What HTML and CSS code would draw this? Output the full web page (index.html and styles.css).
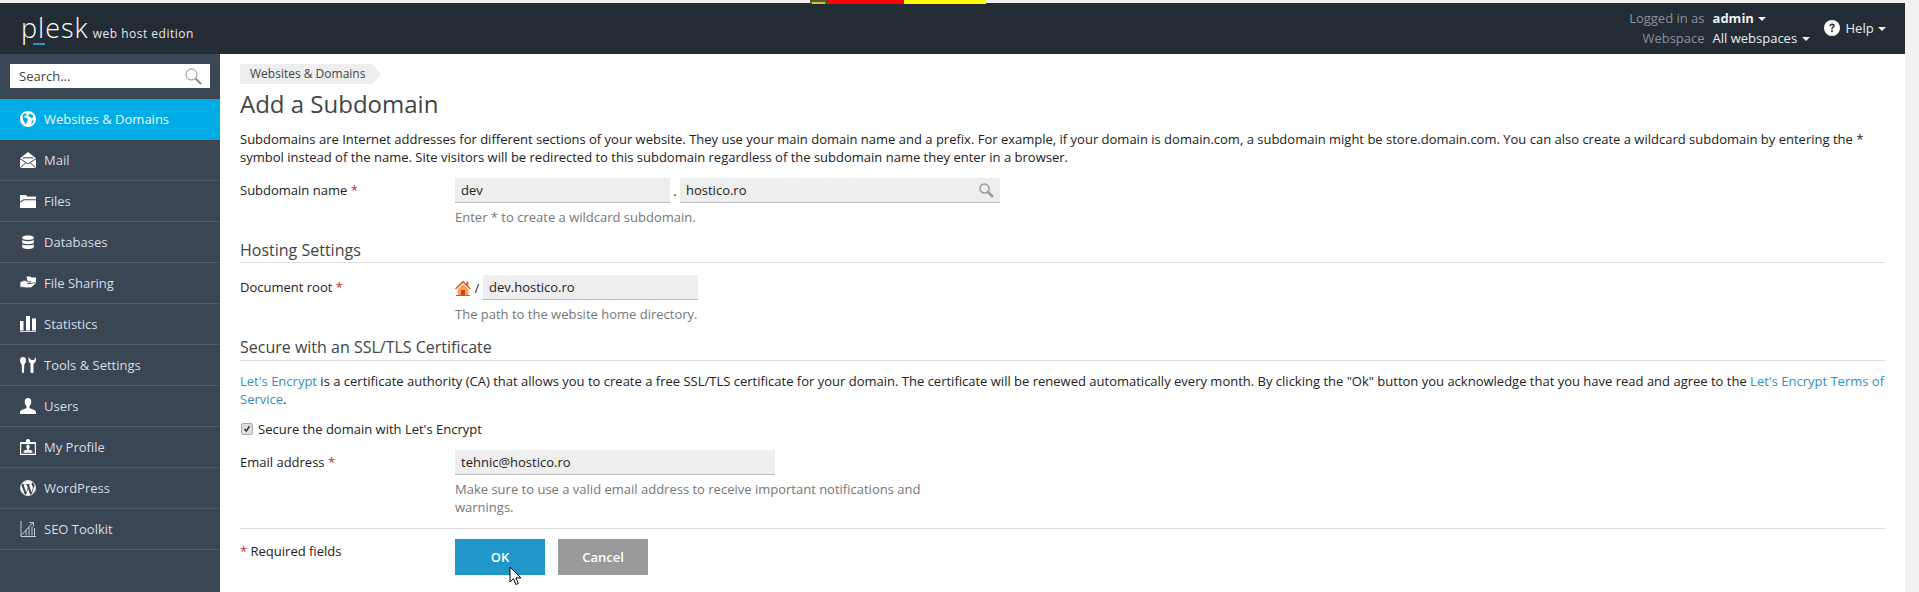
FILE: index.html
```html
<!DOCTYPE html>
<html lang="en">
<head>
    <meta charset="UTF-8">
    <meta name="viewport" content="width=device-width, initial-scale=1.0">
    <title>Add a Subdomain</title>
    <link rel="stylesheet" href="styles.css">
</head>
<body>
    <div class="page">
        <header class="topbar">
            <div class="strip">
                <span class="strip-icon"></span>
                <span class="strip-red"></span>
                <span class="strip-yellow"></span>
            </div>
            <div class="logo">
                <span class="logo-plesk">plesk</span>
                <span class="logo-edition">web host edition</span>
            </div>
            <div class="user-area">
                <div class="user-grid">
                    <span class="user-label">Logged in as</span>
                    <span class="user-value user-name">admin <i class="caret"></i></span>
                    <span class="user-label">Webspace</span>
                    <span class="user-value">All webspaces <i class="caret"></i></span>
                </div>
                <div class="help">
                    <svg class="help-icon" viewBox="0 0 16 16"><circle cx="8" cy="8" r="8" fill="#fff"/><path d="M5.400 6.200c0-1.600 1.200-2.600 2.700-2.600s2.600.9 2.600 2.200c0 1.900-2 1.900-2 3.400H7.100c0-2.200 1.800-2.200 1.800-3.300 0-.5-.4-.9-.9-.9-.6 0-1 .4-1 1.200z" fill="#232b35"/><rect x="7.100" y="10.300" width="1.700" height="1.800" fill="#232b35"/></svg>
                    <span>Help <i class="caret"></i></span>
                </div>
            </div>
        </header>

        <div class="layout">
            <aside class="sidebar">
                <div class="search">
                    <span>Search...</span>
                    <svg class="search-icon" viewBox="0 0 17 17"><circle cx="6.500" cy="6.500" r="5.500" fill="none" stroke="#888" stroke-width="1"/><path d="M10.500 10.500l5.500 5.500" stroke="#888" stroke-width="2"/></svg>
                </div>
                <nav>
                    <ul class="nav">
                        <li class="nav-item active">
                            <svg class="nav-icon" viewBox="0 0 16 16"><circle cx="8" cy="8" r="8" fill="#fff"/><path d="M3 3.500c1.500-1 3-1.200 3.800-.6l-.6 1.600-1.900.4.2 1.700 2.300.5 1.200 1.700-1 2.500-1.500 1.600C3.800 11 1.800 7 3 3.500zM9 2.600l3.600 1.400.8 2.300-2 .9-1.600-1.500-1.300-.4zM12.500 9l1.200.4-.9 2.700-1.800 1.300z" fill="#00ace6"/></svg>
                            <span>Websites &amp; Domains</span>
                        </li>
                        <li class="nav-item">
                            <svg class="nav-icon" viewBox="0 0 16 16"><path d="M8 0L0 6.200V16h16V6.200z" fill="#fff"/><path d="M0 6.600l8 5.400 8-5.400M.3 15.800l5.700-5.200M15.700 15.800L10 10.600M2.800 5.800h10.400" fill="none" stroke="#3a4653" stroke-width="1"/></svg>
                            <span>Mail</span>
                        </li>
                        <li class="nav-item">
                            <svg class="nav-icon" viewBox="0 0 16 16"><path d="M0 2h6l1 1.500h9v2.700H3.500L0 8.500z" fill="#fff"/><path d="M0 9.800l4-2.600h12V15H0z" fill="#fff"/></svg>
                            <span>Files</span>
                        </li>
                        <li class="nav-item">
                            <svg class="nav-icon" viewBox="0 0 16 16"><path d="M2.300 3.200C2.300 .9 13.700 .9 13.700 3.200v10c0 2.300-11.400 2.300-11.400 0z" fill="#fff"/><path d="M2.300 5.200c1.500 1.800 9.900 1.800 11.400 0M2.300 9.400c1.500 1.800 9.900 1.800 11.400 0" fill="none" stroke="#3a4653" stroke-width="1.200"/></svg>
                            <span>Databases</span>
                        </li>
                        <li class="nav-item">
                            <svg class="nav-icon" viewBox="0 0 16 16"><path d="M6.500 1.500h4l1 1H16v6H8z" fill="#fff"/><path d="M0 7l3-1.200c2-.6 3 .5 5 .5h2c1 0 1 1.700 0 1.700H7.500v.6H11l4-1.100c1 0 1.200.8.500 1.300L11 12.800H5l-2-.6H0z" fill="#fff" stroke="#3a4653" stroke-width=".7"/></svg>
                            <span>File Sharing</span>
                        </li>
                        <li class="nav-item">
                            <svg class="nav-icon" viewBox="0 0 16 16"><rect x="0" y="5" width="3.500" height="9.500" fill="#fff"/><rect x="6" y="0" width="4" height="14.500" fill="#fff"/><rect x="12" y="2.500" width="4" height="12" fill="#fff"/><rect x="0" y="15.200" width="16" height=".8" fill="#fff"/></svg>
                            <span>Statistics</span>
                        </li>
                        <li class="nav-item">
                            <svg class="nav-icon" viewBox="0 0 16 16"><path d="M0 3.500C0 1.500 1 0 3 0s3 1.500 3 3.500-1 3-1.700 4L4 15c0 1-.5 1-1 1s-1 0-1-1L1.700 7.500C1 6.500 0 5.500 0 3.500z" fill="#fff"/><path d="M8.500 0v3.500c0 1 1 2.500 2 3V15c0 1 .8 1 1.500 1s1.500 0 1.500-1V6.500c1-.5 2.500-2 2.500-3V0l-2 3h-1l-1-.1-1-.1z" fill="#fff"/></svg>
                            <span>Tools &amp; Settings</span>
                        </li>
                        <li class="nav-item">
                            <svg class="nav-icon" viewBox="0 0 16 16"><path d="M8 0c2.200 0 3.300 1.600 3.300 3.800 0 2-.9 3.700-1.800 4.500v1.700c1.500 1.200 6.500 1.500 6.500 4.500v1.500H0v-1.500C0 11.500 5 11.200 6.500 10V8.300C5.600 7.500 4.700 5.800 4.700 3.800 4.700 1.600 5.800 0 8 0z" fill="#fff"/></svg>
                            <span>Users</span>
                        </li>
                        <li class="nav-item">
                            <svg class="nav-icon" viewBox="0 0 16 16"><path d="M0 3h6V1.500A2 1.500 0 0 1 10 1.500V3h6v13H0z M1.200 5v9.800h13.600V5z" fill="#fff" fill-rule="evenodd"/><path d="M8 5.500c1.200 0 1.700 1 1.700 2 0 1-.5 1.800-.9 2.300v.7c1 .6 3.700.7 3.700 2.500v.8h-9v-.8c0-1.800 2.700-1.900 3.700-2.500v-.7c-.4-.5-.9-1.300-.9-2.300 0-1 .5-2 1.700-2z" fill="#fff"/></svg>
                            <span>My Profile</span>
                        </li>
                        <li class="nav-item">
                            <svg class="nav-icon" viewBox="2 2 20 20"><circle cx="12" cy="12" r="9.500" fill="none" stroke="#fff" stroke-width="1"/><path d="M12.158 12.786l-2.698 7.84c.806.236 1.657.365 2.54.365 1.047 0 2.05-.18 2.986-.51-.024-.037-.046-.078-.065-.123l-2.762-7.57zM3.009 12c0 3.559 2.068 6.634 5.067 8.092L3.788 8.341C3.289 9.459 3.009 10.696 3.009 12zm15.06-.454c0-1.112-.399-1.881-.741-2.48-.456-.741-.883-1.368-.883-2.109 0-.826.627-1.596 1.51-1.596.04 0 .078.005.116.007-1.599-1.465-3.731-2.36-6.071-2.36-3.141 0-5.904 1.612-7.512 4.053.211.007.41.011.579.011.94 0 2.396-.114 2.396-.114.484-.028.541.683.057.74 0 0-.487.057-1.029.085l3.274 9.739 1.968-5.901-1.401-3.838c-.484-.028-.943-.085-.943-.085-.485-.029-.428-.769.057-.741 0 0 1.484.114 2.368.114.94 0 2.397-.114 2.397-.114.485-.028.542.683.057.74 0 0-.488.057-1.029.085l3.249 9.665.897-2.996c.456-1.169.684-2.137.684-2.907zm1.820-3.860c.039.286.06.593.06.924 0 .912-.171 1.938-.684 3.22l-2.746 7.94c2.673-1.558 4.47-4.454 4.47-7.771 0-1.564-.399-3.034-1.1-4.314z" fill="#fff"/></svg>
                            <span>WordPress</span>
                        </li>
                        <li class="nav-item">
                            <svg class="nav-icon" viewBox="0 0 16 16"><g fill="none" stroke="#d8dde2" stroke-width=".9"><path d="M1 0v15.500H16M1 14.500L12.500 2"/><path d="M9.500 1.500H13.500V5.500"/><path d="M6 14.500V9.500M9 14.500V6.500M12 14.500V5.500M14.500 14.500V7"/></g></svg>
                            <span>SEO Toolkit</span>
                        </li>
                    </ul>
                </nav>
            </aside>

            <main class="main-content">
                <div class="breadcrumb">Websites &amp; Domains</div>
                <h1 class="title">Add a Subdomain</h1>
                <p class="intro">Subdomains are Internet addresses for different sections of your website. They use your main domain name and a prefix. For example, if your domain is domain.com, a subdomain might be store.domain.com. You can also create a wildcard subdomain by entering the * symbol instead of the name. Site visitors will be redirected to this subdomain regardless of the subdomain name they enter in a browser.</p>

                <div class="form-row row-subdomain">
                    <div class="form-label">Subdomain name <span class="required">*</span></div>
                    <div class="form-field">
                        <div class="field-line">
                            <div class="input input-sub">dev</div>
                            <span class="dot">.</span>
                            <div class="input input-domain">
                                <span>hostico.ro</span>
                                <svg class="input-search" viewBox="0 0 15 15"><circle cx="5.500" cy="5.500" r="4.500" fill="none" stroke="#999" stroke-width="1.500"/><path d="M9 9l5 5" stroke="#999" stroke-width="2.500"/></svg>
                            </div>
                        </div>
                        <div class="hint">Enter * to create a wildcard subdomain.</div>
                    </div>
                </div>

                <h2 class="section-title section-hosting">Hosting Settings</h2>

                <div class="form-row row-docroot">
                    <div class="form-label">Document root <span class="required">*</span></div>
                    <div class="form-field">
                        <div class="field-line">
                            <svg class="home-icon" viewBox="0 0 16 16"><path d="M8 .5L0 8.500l1 1L8 3l7 6.500 1-1-2.500-2.500V1.500h-2V4z" fill="#e2622a"/><path d="M2.500 9.500L8 4.200l5.500 5.300V16h-11z" fill="#f5a05c"/><rect x="6" y="10" width="4" height="6" fill="#c8440f"/><rect x="1" y="15" width="14" height="1" fill="#d9571d"/></svg>
                            <span class="slash">/</span>
                            <div class="input input-root">dev.hostico.ro</div>
                        </div>
                        <div class="hint">The path to the website home directory.</div>
                    </div>
                </div>

                <h2 class="section-title section-ssl">Secure with an SSL/TLS Certificate</h2>
                <p class="ssl-text"><a href="#">Let's Encrypt</a> is a certificate authority (CA) that allows you to create a free SSL/TLS certificate for your domain. The certificate will be renewed automatically every month. By clicking the "Ok" button you acknowledge that you have read and agree to the <a href="#">Let's Encrypt Terms of Service</a>.</p>

                <label class="check-row">
                    <span class="check">
                        <svg viewBox="0 0 12 12"><path d="M3 6l2.200 2.500L9 2.500" fill="none" stroke="#333" stroke-width="1.800"/></svg>
                    </span>
                    <span>Secure the domain with Let's Encrypt</span>
                </label>

                <div class="form-row row-email">
                    <div class="form-label">Email address <span class="required">*</span></div>
                    <div class="form-field">
                        <div class="input input-email">tehnic@hostico.ro</div>
                        <div class="hint hint-wide">Make sure to use a valid email address to receive important notifications and warnings.</div>
                    </div>
                </div>

                <div class="form-row row-actions">
                    <div class="form-label"><span class="required">*</span> Required fields</div>
                    <div class="buttons">
                        <button class="btn btn-ok">OK</button>
                        <button class="btn btn-cancel">Cancel</button>
                    </div>
                </div>
            </main>
        </div>

        <svg class="cursor" viewBox="0 0 13 20"><path d="M1 1v15l3.500-3.300 2.300 5.800 2.500-1-2.400-5.600h5z" fill="#fff" stroke="#000" stroke-width="1"/></svg>
    </div>
</body>
</html>
```

FILE: styles.css
```css
html, body {
    margin: 0;
    padding: 0;
    height: 592px;
    overflow: hidden;
}

body {
    font-family: "Open Sans", sans-serif;
    font-size: 13px;
    line-height: 18px;
    color: #222;
    background-color: #fff;
}

.page {
    position: relative;
    height: 592px;
    padding: 3px 14px 0 0;
    box-sizing: border-box;
    background-color: #f1f1f1;
    display: flex;
    flex-direction: column;
}

/* top bar */
.topbar {
    position: relative;
    height: 51px;
    box-sizing: border-box;
    flex-shrink: 0;
    background-color: #232b35;
    display: flex;
    justify-content: space-between;
    align-items: center;
    padding: 0 19px 2px 21px;
}

.strip {
    position: absolute;
    top: -3px;
    left: 810px;
    height: 4px;
    display: flex;
}

.strip-icon {
    width: 13px;
    background-color: #c9c93a;
    border: 2px solid #5a5a30;
    border-bottom: 0;
}

.strip-red {
    width: 77px;
    background-color: #f00;
}

.strip-yellow {
    width: 82px;
    background-color: #ff0;
}

.logo {
    display: flex;
    align-items: baseline;
    gap: 4px;
    color: #e6e8ea;
}

.logo-plesk {
    position: relative;
    font-size: 27px;
    font-weight: 300;
    line-height: 34px;
    letter-spacing: 1px;
    color: #fff;
}

.logo-plesk::after {
    content: "";
    position: absolute;
    left: 12px;
    bottom: 0;
    width: 12px;
    height: 2px;
    background-color: #1c9bc9;
}

.logo-edition {
    font-size: 12px;
    letter-spacing: 0.5px;
}

.user-area {
    display: flex;
    align-items: center;
    gap: 14px;
}

.user-grid {
    display: grid;
    grid-template-columns: auto auto;
    column-gap: 8px;
    row-gap: 2px;
}

.user-label {
    text-align: right;
    color: #8a9199;
}

.user-value {
    color: #eceef0;
}

.user-name {
    font-weight: 700;
}

.caret {
    display: inline-block;
    margin-left: 1px;
    vertical-align: middle;
    border-left: 4px solid transparent;
    border-right: 4px solid transparent;
    border-top: 4px solid #eceef0;
}

.help {
    display: flex;
    align-items: center;
    gap: 6px;
    color: #eceef0;
}

.help-icon {
    width: 16px;
    height: 16px;
}

/* sidebar */
.layout {
    flex: 1;
    display: flex;
    min-height: 0;
}

.sidebar {
    width: 220px;
    flex-shrink: 0;
    background-color: #3a4653;
    padding-top: 10px;
}

.search {
    margin: 0 10px;
    height: 24px;
    padding: 0 8px 0 9px;
    background-color: #fff;
    display: flex;
    justify-content: space-between;
    align-items: center;
    color: #444;
}

.search-icon {
    width: 17px;
    height: 17px;
}

.nav {
    list-style: none;
    margin: 11px 0 0;
    padding: 0;
}

.nav-item {
    height: 40px;
    padding-left: 20px;
    display: flex;
    align-items: center;
    gap: 8px;
    color: #d8dde2;
    border-bottom: 1px solid #4f5b68;
}

.nav-item.active {
    background-color: #00ace6;
    color: #e8f8fd;
    border-bottom-color: #00ace6;
}

.nav-icon {
    width: 16px;
    height: 16px;
    flex-shrink: 0;
}

/* main area */
.main-content {
    flex: 1;
    min-width: 0;
    padding: 10px 20px 0;
    background-color: #fff;
}

.breadcrumb {
    position: relative;
    display: inline-block;
    height: 20px;
    padding: 0 7px 0 10px;
    font-size: 12px;
    line-height: 20px;
    color: #444;
    background-color: #eee;
    vertical-align: top;
}

.breadcrumb::after {
    content: "";
    position: absolute;
    top: 0;
    left: 100%;
    border-left: 9px solid #eee;
    border-top: 10px solid transparent;
    border-bottom: 10px solid transparent;
}

.title {
    margin: 2px 0 0;
    font-size: 24px;
    font-weight: 400;
    line-height: 36px;
    color: #444;
}

.intro {
    margin: 8px 0 0;
}

.form-row {
    display: grid;
    grid-template-columns: 215px 1fr;
}

.form-label {
    line-height: 25px;
}

.required {
    color: #c9282d;
}

.row-subdomain {
    margin-top: 12px;
}

.field-line {
    display: flex;
    align-items: center;
}

.input {
    height: 24px;
    padding: 0 6px;
    line-height: 24px;
    box-sizing: content-box;
    background-color: #eee;
    border-bottom: 1px solid #bbb;
}

.input-sub {
    width: 203px;
}

.dot {
    width: 10px;
    text-align: center;
}

.input-domain {
    width: 308px;
    display: flex;
    justify-content: space-between;
    align-items: center;
}

.input-search {
    width: 15px;
    height: 15px;
}

.hint {
    margin-top: 5px;
    color: #777;
}

.hint-wide {
    width: 500px;
}

.section-title {
    margin: 0;
    font-size: 16px;
    font-weight: 400;
    line-height: 24px;
    color: #444;
    border-bottom: 1px solid #ddd;
}

.section-hosting {
    margin-top: 12px;
}

.row-docroot {
    margin-top: 12px;
}

.home-icon {
    width: 16px;
    height: 16px;
}

.slash {
    width: 12px;
    text-align: center;
}

.input-root {
    width: 203px;
}

.section-ssl {
    margin-top: 12px;
    padding-bottom: 1px;
}

.ssl-text {
    margin: 11px 0 0;
}

.ssl-text a {
    color: #2f8fc2;
    text-decoration: none;
}

.check-row {
    margin-top: 12px;
    display: flex;
    align-items: center;
    gap: 5px;
}

.check {
    width: 10px;
    height: 10px;
    margin-left: 1px;
    background-color: #ddd;
    border: 1px solid #aaa;
    border-radius: 2px;
    display: flex;
}

.row-email {
    margin-top: 12px;
}

.input-email {
    width: 308px;
}

.row-actions {
    margin-top: 12px;
    padding-top: 10px;
    border-top: 1px solid #ddd;
}

.buttons {
    display: flex;
    gap: 13px;
}

.btn {
    width: 90px;
    height: 36px;
    border: 0;
    padding: 0;
    font-family: inherit;
    font-size: 13px;
    font-weight: 600;
    color: #fff;
}

.btn-ok {
    background-color: #2196c9;
}

.btn-cancel {
    background-color: #999;
}

/* mouse pointer caught in the screenshot */
.cursor {
    position: absolute;
    left: 509px;
    top: 566px;
    width: 13px;
    height: 20px;
}
```
